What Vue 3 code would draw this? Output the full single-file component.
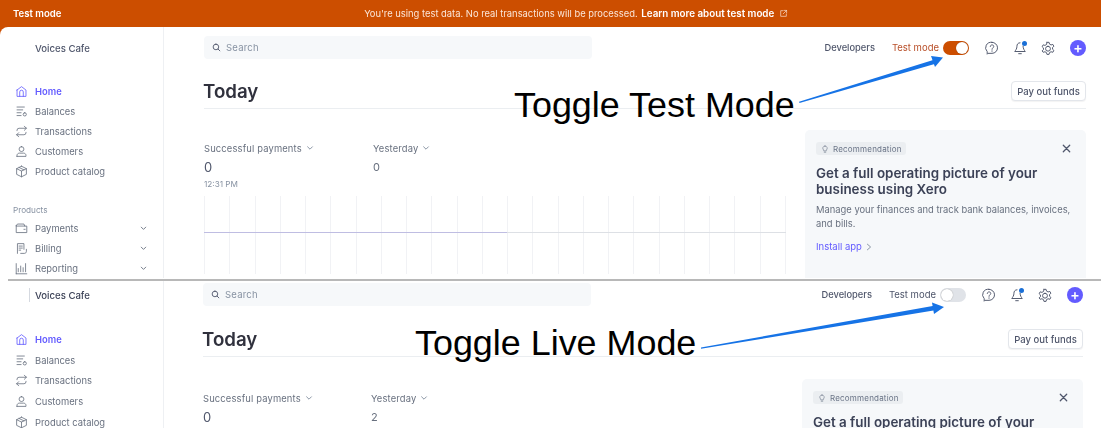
<script setup>
const icons = {
  home: 'M2.5 6.2 8 2l5.5 4.2V14h-11V6.2ZM5.8 14V8.6a2.2 2.2 0 0 1 4.4 0V14',
  balances: 'M2.5 2.5h9M2.5 6h7M2.5 9.5h5M2.5 13h5M12 9.5a2 2 0 1 1 0 4 2 2 0 0 1 0-4Z',
  transactions: 'M11.5 1.5 14 4l-2.5 2.5M14 4H5a2.5 2.5 0 0 0-2.5 2.5V7M4.5 14.5 2 12l2.5-2.5M2 12h9a2.5 2.5 0 0 0 2.5-2.5V9',
  customers: 'M8 2a3 3 0 1 1 0 6 3 3 0 0 1 0-6ZM2.5 14v-1.2C2.500 11 4 10 5.500 10h5c1.500 0 3 1 3 2.800V14h-11Z',
  catalog: 'M8 1.500 14 4.500v7L8 14.500 2 11.500v-7L8 1.500ZM2 4.500l6 3 6-3M8 7.500v7M5 3l6 3',
  payments: 'M1.500 4.500v8.500h13V5h-13M1.500 4.500 3 2.500h8l1 2.500M11 9h1.500',
  billing: 'M3 14V2h8v7M5 5h4M5 7.500h4M5 10h2M7 14h4.500c1.500 0 2.500-1 2.500-2.500V9',
  reporting: 'M1.500 14.500h13M4 12V8M7 12V5M10 12V7M13 12V2M1.500 2v12.500'
}

const mainNav = [
  { label: 'Home', icon: 'home', active: true },
  { label: 'Balances', icon: 'balances' },
  { label: 'Transactions', icon: 'transactions' },
  { label: 'Customers', icon: 'customers' },
  { label: 'Product catalog', icon: 'catalog' }
]

const productNav = [
  { label: 'Payments', icon: 'payments' },
  { label: 'Billing', icon: 'billing' },
  { label: 'Reporting', icon: 'reporting' }
]

const screens = [
  { id: 'test', testMode: true, yesterday: '0', time: '12:31 PM' },
  { id: 'live', testMode: false, yesterday: '2', time: '' }
]

const gridLines = Array.from({ length: 24 }, (_, i) => i)
</script>

<template>
  <div class="page">
    <section v-for="screen in screens" :key="screen.id" class="screen" :class="screen.id">
      <div v-if="screen.testMode" class="banner">
        <strong class="banner-title">Test mode</strong>
        <div class="banner-msg">
          You're using test data. No real transactions will be processed.
          <b>Learn more about test mode</b>
          <svg class="ext" viewBox="0 0 16 16"><path d="M7 3H3v10h10V9M9 2.500h4.500V7M13.500 2.500 7.500 8.500" /></svg>
        </div>
      </div>

      <div class="sheet">
        <aside class="sidebar">
          <div class="account">Voices Cafe</div>
          <nav class="nav">
            <a v-for="item in mainNav" :key="item.label" class="nav-item" :class="{ active: item.active }">
              <svg class="nav-icon" viewBox="0 0 16 16"><path :d="icons[item.icon]" /></svg>
              {{ item.label }}
            </a>
          </nav>
          <div v-if="screen.testMode" class="nav-title">Products</div>
          <nav v-if="screen.testMode" class="nav">
            <a v-for="item in productNav" :key="item.label" class="nav-item">
              <svg class="nav-icon" viewBox="0 0 16 16"><path :d="icons[item.icon]" /></svg>
              {{ item.label }}
              <svg class="chev" viewBox="0 0 10 10"><path d="M2.500 3.500 5 6 7.500 3.500" /></svg>
            </a>
          </nav>
        </aside>

        <main class="main">
          <div class="topbar">
            <div class="search">
              <svg viewBox="0 0 16 16"><path d="M7 2a5 5 0 1 1 0 10A5 5 0 0 1 7 2ZM10.800 10.800 14 14" /></svg>
              Search
            </div>
            <div class="top-actions">
              <span class="dev">Developers</span>
              <span class="mode">Test mode</span>
              <span class="toggle"><i /></span>
              <svg class="tool help" viewBox="0 0 16 16"><path d="M8 1.500a6.300 6.300 0 0 1 0 12.600H3.500l-1 1v-3A6.300 6.300 0 0 1 8 1.500ZM6 6.200C6 3.800 10 3.800 10 6.200 10 7.800 8 7.800 8 9.500M8 11.200v.6" /></svg>
              <span class="bell">
                <svg class="tool" viewBox="0 0 16 16"><path d="M8 2C5.500 2 4.500 4 4.500 6c0 3-1.500 4.500-2.500 6h12c-1-1.500-2.500-3-2.500-6M6.500 14.500h3" /></svg>
                <i />
              </span>
              <svg class="tool" viewBox="0 0 16 16"><path d="M6.800 1.500h2.400l.5 2 1.800 1 2-.6 1.200 2.100-1.500 1.400v2l1.500 1.400-1.200 2.100-2-.6-1.800 1-.5 2H6.800l-.5-2-1.800-1-2 .6L1.300 11.300l1.500-1.400v-2L1.300 6.500l1.200-2.100 2 .6 1.800-1 .5-2ZM8 6a2.800 2.800 0 1 1 0 5.600A2.800 2.800 0 0 1 8 6Z" /></svg>
              <span class="plus">+</span>
            </div>
          </div>

          <div class="head">
            <h1>Today</h1>
            <button class="payout">Pay out funds</button>
          </div>

          <div class="content">
            <div class="stats">
              <div class="stat-row">
                <div class="stat first">
                  <div class="stat-label">Successful payments <svg viewBox="0 0 10 10"><path d="M2 3.500 5 6.500 8 3.500" /></svg></div>
                  <div class="stat-value">0</div>
                  <div v-if="screen.time" class="stat-time">{{ screen.time }}</div>
                </div>
                <div class="stat">
                  <div class="stat-label">Yesterday <svg viewBox="0 0 10 10"><path d="M2 3.500 5 6.500 8 3.500" /></svg></div>
                  <div class="stat-value small">{{ screen.yesterday }}</div>
                </div>
              </div>
              <div v-if="screen.testMode" class="chart">
                <span v-for="n in gridLines" :key="n" class="grid-line" />
                <span class="chart-line" />
              </div>
            </div>

            <div class="card">
              <div class="card-top">
                <span class="pill">
                  <svg viewBox="0 0 16 16"><path d="M8 2a4.500 4.500 0 0 1 2.500 8.200V12h-5v-1.800A4.500 4.500 0 0 1 8 2ZM6.500 14.500h3" /></svg>
                  Recommendation
                </span>
                <svg class="close" viewBox="0 0 12 12"><path d="M2.500 2.500l7 7M9.500 2.500l-7 7" /></svg>
              </div>
              <h2>Get a full operating picture of your business using Xero</h2>
              <p>Manage your finances and track bank balances, invoices, and bills.</p>
              <a class="install">Install app <svg viewBox="0 0 10 10"><path d="M3 1.500 7 5 3 8.500" /></svg></a>
            </div>
          </div>
        </main>
      </div>
    </section>

    <!-- callouts drawn over the two screenshots -->
    <div class="callout callout-test">Toggle Test Mode</div>
    <div class="callout callout-live">Toggle Live Mode</div>
    <svg class="arrows" viewBox="0 0 1101 428">
      <path d="M799 101.800 934 59.800 935.500 63.800 799.500 103Z" class="head-fill" />
      <path d="M943 57.500 931 56 935 67Z" class="head-fill" />
      <path d="M701 347.500 934 305.800 935 310.200 701 348.800Z" class="head-fill" />
      <path d="M944 307 932 302.500 934 314Z" class="head-fill" />
    </svg>
  </div>
</template>

<style>
html,
body {
  margin: 0;
  background: #fff;
}
</style>

<style scoped>
.page {
  position: relative;
  width: 1101px;
  height: 428px;
  overflow: hidden;
  background: #fff;
  font-family: Inter, "Noto Sans", sans-serif;
  color: #4f566b;
}

svg {
  fill: none;
  stroke: currentColor;
  stroke-width: 1.2;
  stroke-linecap: round;
  stroke-linejoin: round;
}

.screen {
  overflow: hidden;
  filter: blur(0.35px);
}

.screen.test {
  height: 278px;
  background: #cc4e00;
  --main-left: 40px;
  --main-right: 15px;
  --top-gap: 9px;
  --head-gap: 22px;
  --content-gap: 21px;
  --stats-top: 12px;
  --row-h: 20px;
  --nav-top: 25px;
  --yesterday-x: 169px;
}

.screen.live {
  height: 147px;
  margin-top: 3px;
  --main-left: 39px;
  --main-right: 18px;
  --top-gap: 2px;
  --head-gap: 23px;
  --content-gap: 22px;
  --stats-top: 13px;
  --row-h: 20.7px;
  --nav-top: 26px;
  --yesterday-x: 168px;
}

.banner {
  display: flex;
  align-items: center;
  height: 27px;
  padding: 0 10px 0 13px;
  color: #fff;
  font-size: 9.6px;
}

.banner-title {
  font-weight: 600;
}

.banner-msg {
  flex: 1;
  text-align: center;
  color: #fbe6d8;
  font-size: 9.4px;
}

.banner-msg b {
  margin-left: 1px;
  color: #fff;
  font-size: 9.8px;
  font-weight: 600;
}

.ext {
  width: 9px;
  height: 9px;
  margin-left: 5px;
  vertical-align: -1px;
}

.sheet {
  display: flex;
  height: 100%;
  background: #fff;
  border-top-left-radius: 8px;
}

.sidebar {
  flex: 0 0 164px;
  box-sizing: border-box;
  border-right: 1px solid #eef0f3;
  font-size: 9.4px;
}

.account {
  height: 15px;
  margin-top: calc(var(--top-gap) + 5px);
  padding-left: 35px;
  color: #4f566b;
  font-size: 9.6px;
  font-weight: 500;
  line-height: 15px;
}

.live .account {
  position: relative;
  color: #3c4257;
  padding-left: 35px;
}

.live .account::before {
  content: "";
  position: absolute;
  left: 29px;
  top: 0;
  width: 1px;
  height: 14px;
  background: #d5d9e0;
}

.nav {
  display: flex;
  flex-direction: column;
}

.account + .nav {
  margin-top: var(--nav-top);
}

.nav-item {
  display: flex;
  align-items: center;
  gap: 7px;
  height: var(--row-h);
  padding-left: 15px;
  color: #68707f;
}

.nav-item.active {
  color: #635bff;
  font-weight: 600;
}

.nav-icon {
  flex: none;
  width: 13px;
  height: 13px;
  stroke-width: 1;
}

.chev {
  width: 9px;
  height: 9px;
  margin-left: auto;
  margin-right: 15px;
  color: #68707f;
  stroke-width: 1;
}

.nav-title {
  margin: 24px 0 0 13px;
  height: 13px;
  color: #8792a2;
  font-size: 8.2px;
  line-height: 11px;
}

.main {
  flex: 1;
  min-width: 0;
  padding: var(--top-gap) var(--main-right) 0 var(--main-left);
}

.topbar {
  display: flex;
  align-items: center;
  justify-content: space-between;
  height: 23px;
}

.search {
  display: flex;
  align-items: center;
  gap: 5px;
  box-sizing: border-box;
  width: 388px;
  height: 23px;
  padding-left: 8px;
  border-radius: 4px;
  background: #f6f8fa;
  color: #8792a2;
  font-size: 9.5px;
  letter-spacing: 0.2px;
}

.search svg {
  width: 9px;
  height: 9px;
  color: #4f566b;
  stroke-width: 1.6;
}

.top-actions {
  display: flex;
  align-items: center;
  font-size: 9.5px;
}

.dev {
  margin-right: 17px;
  color: #4f566b;
  font-size: 9.3px;
  font-weight: 500;
}

.mode {
  margin-right: 4px;
  color: #4f566b;
}

.test .mode {
  color: #b9502a;
}

.toggle {
  display: flex;
  align-items: center;
  justify-content: flex-start;
  box-sizing: border-box;
  width: 26px;
  height: 14px;
  margin-right: 16px;
  padding: 1px;
  border-radius: 7px;
  background: #e0e3e8;
}

.test .toggle {
  justify-content: flex-end;
  background: #cc4e00;
}

.toggle i {
  width: 12px;
  height: 12px;
  border-radius: 50%;
  background: #fff;
  box-shadow: 0 0 1px rgba(0, 0, 0, 0.4);
}

.tool {
  display: block;
  width: 14px;
  height: 14px;
  color: #4f566b;
  margin-right: 14px;
  stroke-width: 1.1;
}

.bell {
  position: relative;
  display: block;
}

.bell i {
  position: absolute;
  top: 0;
  right: 14px;
  width: 5px;
  height: 5px;
  border-radius: 50%;
  background: #1a6fd6;
}

.plus {
  width: 16px;
  height: 16px;
  margin-left: 1px;
  border-radius: 50%;
  background: #635bff;
  color: #fff;
  font-size: 14px;
  font-weight: 600;
  line-height: 15px;
  text-align: center;
}

.head {
  display: flex;
  align-items: center;
  justify-content: space-between;
  margin-top: var(--head-gap);
  padding-bottom: 7px;
  border-bottom: 1px solid #ebeef1;
}

h1 {
  margin: 1px 0 0 -1px;
  color: #30313d;
  font-size: 18.7px;
  font-weight: 600;
  line-height: 19px;
}

.payout {
  box-sizing: border-box;
  width: 75px;
  height: 20px;
  padding: 0;
  border: 1px solid #e3e6eb;
  border-radius: 4px;
  background: #fff;
  box-shadow: 0 1px 1px rgba(0, 0, 0, 0.05);
  color: #4f566b;
  font-family: inherit;
  font-size: 9.5px;
  font-weight: 500;
}

.content {
  display: flex;
  gap: 19px;
  margin-top: var(--content-gap);
}

.stats {
  flex: 1;
  min-width: 0;
  padding-top: var(--stats-top);
}

.stat-row {
  display: flex;
}

.stat {
  font-size: 9.4px;
}

.stat.first {
  width: var(--yesterday-x);
}

.stat-label {
  display: flex;
  align-items: center;
  gap: 4px;
  height: 12px;
  color: #68707f;
  letter-spacing: 0.15px;
}

.stat-label svg {
  width: 8px;
  height: 8px;
  color: #8792a2;
}

.stat-value {
  margin-top: 6px;
  height: 14px;
  color: #4f566b;
  font-size: 13px;
  line-height: 14px;
}

.stat-value.small {
  font-size: 11px;
  color: #68707f;
}

.stat-time {
  margin-top: 5px;
  color: #8792a2;
  font-size: 8.2px;
  line-height: 10px;
}

.chart {
  position: relative;
  display: flex;
  justify-content: space-between;
  height: 78px;
  margin-top: 7px;
}

.grid-line {
  width: 1px;
  background: #f1f2f5;
}

.chart-line {
  position: absolute;
  left: 0;
  right: 0;
  top: 36px;
  height: 1px;
  background: linear-gradient(to right, #bfbde2 52%, #dde0e5 52%);
}

.card {
  flex: 0 0 281px;
  box-sizing: border-box;
  height: 170px;
  padding: 12px 11px 0;
  border-radius: 5px;
  background: #f6f8fa;
}

.card-top {
  display: flex;
  align-items: center;
  justify-content: space-between;
  height: 13px;
}

.pill {
  display: flex;
  align-items: center;
  gap: 4px;
  box-sizing: border-box;
  height: 13px;
  padding: 0 4px 0 5px;
  border-radius: 3px;
  background: #ebeef1;
  color: #697386;
  font-size: 8px;
  letter-spacing: 0.2px;
}

.pill svg {
  width: 8px;
  height: 8px;
}

.close {
  width: 11px;
  height: 11px;
  margin-right: 3px;
  color: #4f566b;
  stroke-width: 1.4;
}

h2 {
  margin: 10px 0 0;
  color: #3c4257;
  font-size: 13.4px;
  font-weight: 600;
  line-height: 16px;
}

p {
  margin: 6px 0 0;
  color: #68707f;
  font-size: 9.4px;
  line-height: 14px;
}

.install {
  display: flex;
  align-items: center;
  gap: 3px;
  margin-top: 10px;
  color: #635bff;
  font-size: 9.5px;
}

.install svg {
  width: 8px;
  height: 8px;
  color: #8792a2;
}

.page::after {
  content: "";
  position: absolute;
  left: 8px;
  right: 0;
  top: 278.500px;
  height: 2.500px;
  background: #b8b8b8;
}

.callout {
  position: absolute;
  color: #000;
  font-family: "Liberation Sans", Arial, sans-serif;
  font-size: 35.900px;
  line-height: 40px;
  white-space: nowrap;
}

.callout-test {
  left: 514px;
  top: 85px;
}

.callout-live {
  left: 415px;
  top: 323px;
}

.arrows {
  position: absolute;
  inset: 0;
  width: 1101px;
  height: 428px;
  pointer-events: none;
}

.head-fill {
  fill: #1673e6;
  stroke: none;
}
</style>
